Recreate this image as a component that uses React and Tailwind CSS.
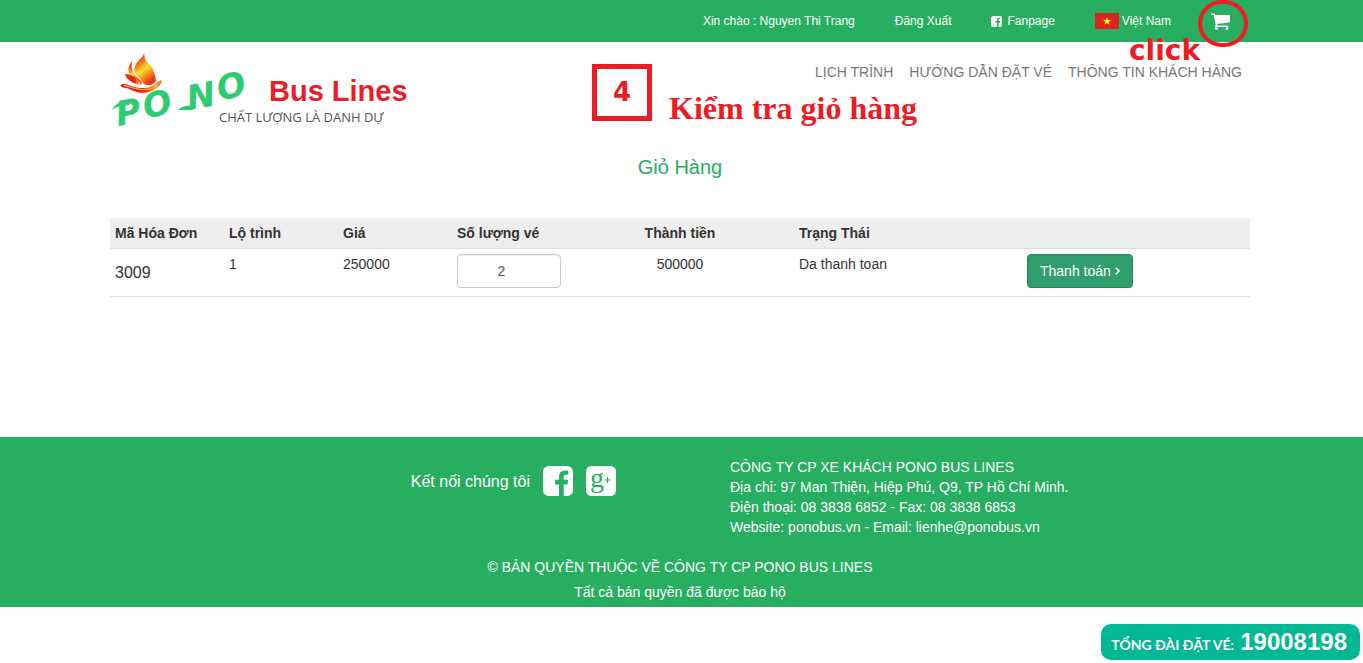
import React from "react";

function CartIcon({ className }) {
  return (
    <svg viewBox="64 128 1664 1536" fill="currentColor" aria-hidden="true" className={className}>
      <path d="M640 1536q0 52-38 90t-90 38-90-38-38-90 38-90 90-38 90 38 38 90zm896 0q0 52-38 90t-90 38-90-38-38-90 38-90 90-38 90 38 38 90zm128-1088v512q0 24-16.5 42.5t-40.5 21.5l-1044 122q13 60 13 70 0 16-24 64h920q26 0 45 19t19 45-19 45-45 19h-1024q-26 0-45-19t-19-45q0-11 8-31.5t16-36 21.5-40 15.5-29.5l-177-823h-204q-26 0-45-19t-19-45 19-45 45-19h256q16 0 28.5 6.5t19.5 15.5 13 24.5 8 26 5.5 29.5 4.5 26h1201q26 0 45 19t19 45z" />
    </svg>
  );
}

function FacebookIcon({ className }) {
  return (
    <svg viewBox="128 128 1536 1536" fill="currentColor" aria-hidden="true" className={className}>
      <path d="M1376 128q119 0 203.5 84.5t84.5 203.5v960q0 119-84.5 203.5t-203.5 84.5h-188v-595h199l30-232h-229v-148q0-56 23.5-84t91.5-28l122-1v-207q-63-9-178-9-136 0-217.5 80t-81.5 226v171h-200v232h200v595h-532q-119 0-203.5-84.5t-84.5-203.5v-960q0-119 84.5-203.5t203.5-84.5h960z" />
    </svg>
  );
}

function GooglePlusIcon({ className }) {
  return (
    <svg viewBox="0 0 30 30" aria-hidden="true" className={className}>
      <rect width="30" height="30" rx="5.5" fill="#fff" />
      <text x="4" y="20.5" fontSize="28" fill="#27ae60" fontFamily="'Liberation Serif', serif">g</text>
      <path d="M18.5 14h6M21.5 11v6" stroke="#27ae60" strokeWidth="1.2" />
    </svg>
  );
}

function VietnamFlag({ className }) {
  return (
    <svg viewBox="0 0 24 16" aria-hidden="true" className={className}>
      <rect width="24" height="16" fill="#da251d" />
      <path d="M12 4.2l.95 2.9H16l-2.45 1.8.93 2.9L12 10l-2.48 1.8.93-2.9L8 7.1h3.05z" fill="#ff0" />
    </svg>
  );
}

function Logo({ className }) {
  return (
    <svg viewBox="0 0 300 80" role="img" aria-label="PONO Bus Lines" className={className}>
      <defs>
        <linearGradient id="flame" x1="0" y1="0" x2="0.5" y2="1">
          <stop offset="0" stopColor="#e8140c" />
          <stop offset="0.3" stopColor="#f4551a" />
          <stop offset="0.6" stopColor="#fde02a" />
          <stop offset="1" stopColor="#f0341a" />
        </linearGradient>
        <linearGradient id="bowl" x1="0" y1="0" x2="1" y2="0">
          <stop offset="0" stopColor="#e8281a" />
          <stop offset="0.55" stopColor="#ee1c14" />
          <stop offset="0.85" stopColor="#fbb03b" />
          <stop offset="1" stopColor="#f15a24" />
        </linearGradient>
      </defs>
      <g transform="scale(0.3333) translate(0 -6)">
        <path fill="url(#flame)" d="M103 12C102 32 72 40 73 66C75 84 94 90 99 106C112 116 130 112 138 98C134 74 130 60 118 50C108 42 102 30 103 12Z" />
        <path fill="url(#flame)" d="M68 38C62 52 66 72 80 86C90 94 95 100 97 107C82 98 58 88 56 70C54 54 62 44 68 38Z" />
        <path fill="url(#bowl)" d="M44 78C62 78 84 90 96 110C76 110 52 100 44 78Z" />
        <path fill="url(#bowl)" d="M31 112C38 104 50 109 62 113C84 122 120 126 138 105C144 98 152 96 156 98C150 122 120 137 90 134C70 131 60 122 46 120C40 119 33 118 31 112Z" />
        <path d="M42 113C66 116 84 130 124 122" fill="none" stroke="#ffd23c" strokeWidth="3" />
      </g>
      <g fill="#2ecc71" fontFamily="'DejaVu Sans', sans-serif" fontWeight="bold" fontStyle="italic" fontSize="34">
        <text transform="translate(8 76) rotate(-10)">P</text>
        <text transform="translate(36 69) rotate(-14)">O</text>
        <text transform="translate(79 60) rotate(-10)">N</text>
        <text transform="translate(110 51) rotate(-14)">O</text>
      </g>
      <path d="M2 60C5 54 10 51 20 50L19 55C11 56 6 57 2 60Z M68 60C71 56 77 55 84 56L82 60C77 60 72 60 68 60Z" fill="#2ecc71" />
      <text x="159" y="51" fontFamily="'Liberation Sans', sans-serif" fontWeight="bold" fontSize="29" fill="#ed1c2b">Bus Lines</text>
      <text x="109" y="72" fontFamily="'Open Sans', sans-serif" fontSize="13" fill="#555">CHẤT LƯỢNG LÀ DANH DỰ</text>
    </svg>
  );
}

function TopBar() {
  return (
    <div className="bg-[#27ae60] pr-[3px] text-white">
      <nav className="mx-auto flex h-[42px] max-w-[1140px] items-center justify-end gap-10 pr-[19px] text-xs">
        <span>Xin chào : Nguyen Thi Trang</span>
        <a href="#logout">Đăng Xuất</a>
        <a href="#fanpage" className="flex items-center gap-[5px]">
          <FacebookIcon className="size-[11px]" />
          Fanpage
        </a>
        <a href="#language" className="flex items-center gap-[3px]">
          <VietnamFlag className="h-4 w-6" />
          Việt Nam
        </a>
        <a href="#cart" aria-label="Giỏ hàng" className="relative">
          <CartIcon className="h-[18px] w-5" />
          <span className="absolute -top-[12px] -left-[13px] h-[47px] w-[50px] rounded-full border-4 border-[#ed1c24]" />
          <span className="absolute top-[23px] right-[31px] font-['DejaVu_Sans',sans-serif] text-[28px] leading-8 font-bold text-[#ed1c24]">
            click
          </span>
        </a>
      </nav>
    </div>
  );
}

function Header() {
  return (
    <header className="pr-[3px]">
      <div className="relative mx-auto flex max-w-[1140px] items-start justify-between pt-2">
        <a href="#home">
          <Logo className="h-20 w-[300px] overflow-visible" />
        </a>
        <nav className="flex gap-4 pt-3 pr-2 text-sm text-[#777]">
          <a href="#schedule">LỊCH TRÌNH</a>
          <a href="#guide">HƯỚNG DẪN ĐẶT VÉ</a>
          <a href="#customer">THÔNG TIN KHÁCH HÀNG</a>
        </nav>
        <div className="absolute top-[22px] right-[333px] flex items-start gap-[17px] text-[#ed1c24]">
          <span className="flex h-[57px] w-[60px] items-center justify-center border-[5px] border-[#ed1c24] font-['DejaVu_Sans',sans-serif] text-[26px] font-bold">
            4
          </span>
          <span className="pt-6 font-['Liberation_Serif',serif] text-[32px] leading-10 font-bold whitespace-nowrap">
            Kiểm tra giỏ hàng
          </span>
        </div>
      </div>
    </header>
  );
}

function CartTable() {
  return (
    <table className="w-full table-fixed border-collapse text-left text-sm text-[#333]">
      <colgroup>
        <col className="w-[10%]" />
        <col className="w-[10%]" />
        <col className="w-[10%]" />
        <col className="w-[10%]" />
        <col className="w-[20%]" />
        <col className="w-[20%]" />
        <col className="w-[20%]" />
      </colgroup>
      <thead>
        <tr className="border-b border-[#ddd] bg-[#eee]">
          <th className="p-[5px]">Mã Hóa Đơn</th>
          <th className="p-[5px]">Lộ trình</th>
          <th className="p-[5px]">Giá</th>
          <th className="p-[5px]" id="qty-label">Số lượng vé</th>
          <th className="p-[5px] text-center">Thành tiền</th>
          <th className="p-[5px]">Trạng Thái</th>
          <th className="p-[5px]" aria-label="Thanh toán" />
        </tr>
      </thead>
      <tbody>
        <tr className="h-12 border-b border-[#ddd] align-top">
          <td className="p-[5px] align-middle text-base">3009</td>
          <td className="p-[5px]">1</td>
          <td className="p-[5px]">250000</td>
          <td className="p-[5px]">
            <input
              type="number"
              defaultValue="2"
              aria-labelledby="qty-label"
              className="block h-[34px] w-full rounded border border-[#ccc] bg-white px-3 text-center text-[#555] shadow-[inset_0_1px_1px_rgba(0,0,0,0.075)]"
            />
          </td>
          <td className="p-[5px] text-center">500000</td>
          <td className="p-[5px]">Da thanh toan</td>
          <td className="p-[5px]">
            <button
              type="button"
              className="flex h-[34px] items-center gap-1 rounded border border-[#27875a] bg-[#309f6d] px-3 text-white"
            >
              Thanh toán
              <svg viewBox="0 0 5 8" fill="none" stroke="currentColor" strokeWidth="1.6" aria-hidden="true" className="h-2 w-[5px]">
                <path d="M.8.8L4 4 .8 7.2" />
              </svg>
            </button>
          </td>
        </tr>
      </tbody>
    </table>
  );
}

function Footer() {
  return (
    <footer className="bg-[#27ae60] pt-5 pr-[3px] pb-0.5 text-sm text-white">
      <div className="mx-auto grid max-w-[1140px] grid-cols-2">
        <div className="flex items-start justify-end gap-[13px] pt-[9px] pr-16">
          <span className="text-base leading-8">Kết nối chúng tôi</span>
          <a href="#facebook" aria-label="Facebook">
            <FacebookIcon className="size-[30px]" />
          </a>
          <a href="#google-plus" aria-label="Google Plus">
            <GooglePlusIcon className="size-[30px] overflow-visible" />
          </a>
        </div>
        <address className="pl-[50px] leading-5 not-italic">
          CÔNG TY CP XE KHÁCH PONO BUS LINES
          <br />
          Địa chỉ: 97 Man Thiện, Hiệp Phú, Q9, TP Hồ Chí Minh.
          <br />
          Điện thoại: 08 3838 6852 - Fax: 08 3838 6853
          <br />
          Website: ponobus.vn - Email: lienhe@ponobus.vn
        </address>
      </div>
      <div className="pt-[18px] text-center leading-[25px]">
        <p>© BẢN QUYỀN THUỘC VỀ CÔNG TY CP PONO BUS LINES</p>
        <p>Tất cả bản quyền đã được bảo hộ</p>
      </div>
    </footer>
  );
}

export default function App() {
  return (
    <div className="min-h-screen bg-white font-['Liberation_Sans',Arial,sans-serif]">
      <TopBar />
      <Header />
      <main className="pr-[3px] pb-[140px]">
        <div className="mx-auto max-w-[1140px]">
          <h1 className="pt-[23px] pb-[37px] text-center text-xl text-[#27ae60]">Giỏ Hàng</h1>
          <CartTable />
        </div>
      </main>
      <Footer />
      <a
        href="tel:19008198"
        className="fixed right-[3px] bottom-[3px] flex h-9 items-baseline gap-1.5 rounded-[10px] bg-[#00b894] pr-[13px] pl-[10px] text-white"
      >
        <span className="font-['Lato',sans-serif] text-sm font-bold">TỔNG ĐÀI ĐẶT VÉ:</span>
        <span className="text-2xl leading-9 font-bold">19008198</span>
      </a>
    </div>
  );
}
